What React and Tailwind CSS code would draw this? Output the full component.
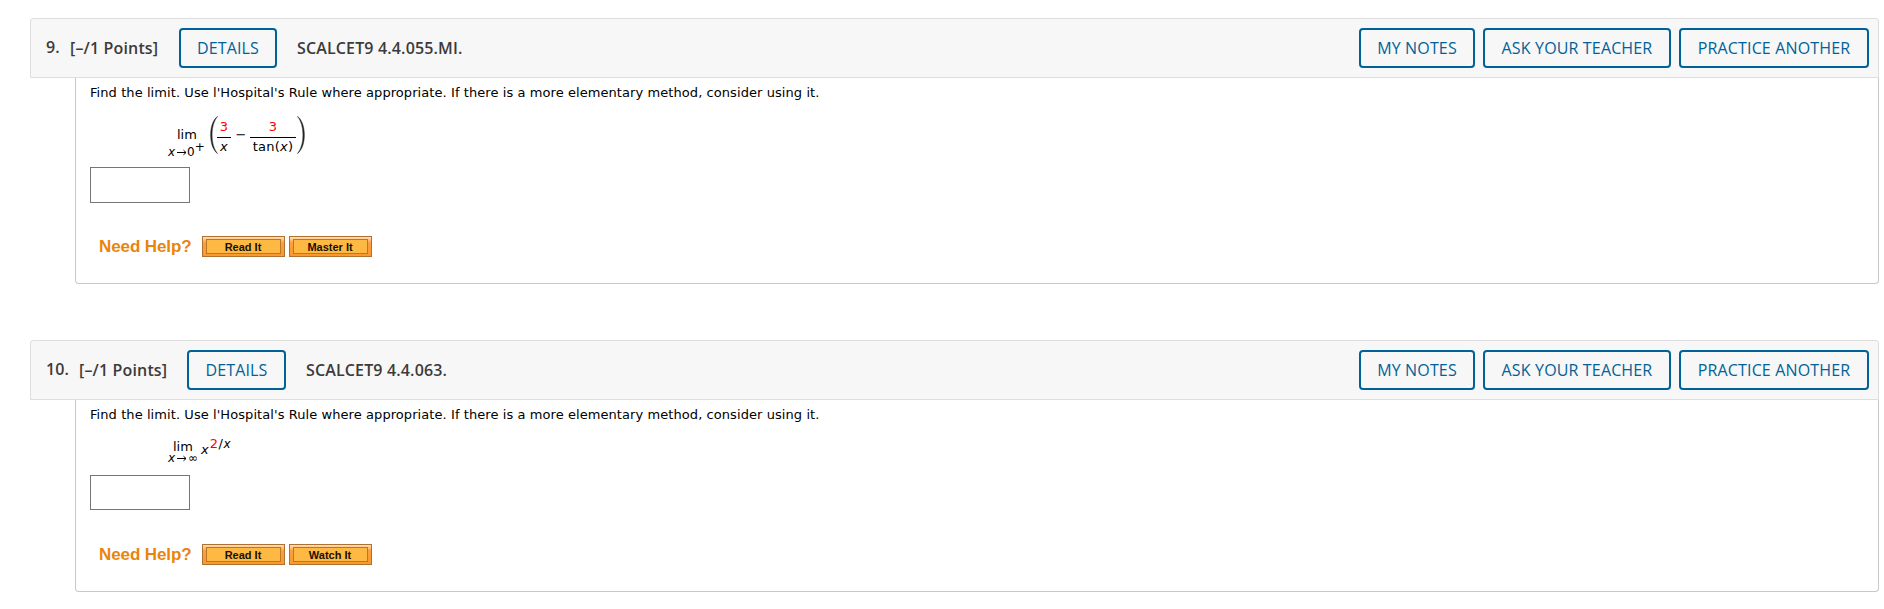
import { useState } from 'react';

const HeaderButton = ({ children, className = '' }) => (
    <button
        type="button"
        className={`h-10 shrink-0 rounded border-2 border-[#006298] text-center font-['Open_Sans',sans-serif] text-base leading-9 font-normal tracking-[0.15px] whitespace-nowrap text-[#006298] ${className}`}
    >
        {children}
    </button>
);

const HelpButton = ({ children }) => (
    <button
        type="button"
        className="h-[21px] w-[83px] border border-[#b07030] bg-linear-to-b from-[#fde0bd] via-[#fb9f3d] via-30% to-[#fa992c] px-[3px] pt-0.5 pb-0.5"
    >
        <span className="block h-[15px] border border-[#b9772a] bg-[#fdb944] pr-px text-center font-['Liberation_Sans',Arial,sans-serif] text-[11px] leading-[14px] font-bold text-[#1a1005]">
            {children}
        </span>
    </button>
);

const Paren = ({ flip = false }) => (
    <svg width="8" height="38" viewBox="0 0 8 38" className={flip ? 'ml-px shrink-0 -scale-x-100' : 'shrink-0'}>
        <path
            d="M7.6 0.3C2.8 4 0.6 11 0.6 19S2.8 34 7.6 37.7C4 33 2.1 27 2.1 19S4 5 7.6 0.3Z"
            fill="#222"
            stroke="#222"
            strokeWidth="0.4"
        />
    </svg>
);

const RightArrow = () => (
    <svg width="10" height="7" viewBox="0 0 10 7" fill="none" stroke="#000">
        <path d="M0 3.5H9M6.5 1.2L9 3.5L6.5 5.8" />
    </svg>
);

const Fraction = ({ top, bottom, className }) => (
    <span className={`flex shrink-0 flex-col text-center ${className}`}>
        <span className="h-[17px] shrink-0 leading-[14px] text-[#ff0000]">{top}</span>
        <span className="h-px shrink-0 bg-black" />
        <span className="h-[18px] shrink-0 leading-[17px] tracking-[0.2px] whitespace-nowrap">{bottom}</span>
    </span>
);

const DifferenceLimit = () => (
    <div className="flex h-[38px] pl-[78px]">
        <div className="flex w-[42px] shrink-0 flex-col pt-[10px]">
            <span className="h-[19px] shrink-0 pl-[9px] leading-[17px]">lim</span>
            <span className="flex h-[14px] shrink-0 items-center text-[12px] leading-[14px]">
                <i>x</i>
                <span className="ml-[2px]"><RightArrow /></span>
                <span>0</span>
                <span className="-mt-[11px] text-[12px]">+</span>
            </span>
        </div>
        <Paren />
        <Fraction className="-ml-px mt-[4px] w-[14px]" top="3" bottom={<i>x</i>} />
        <span className="mt-[10px] w-[19px] pl-px text-center leading-[18px]">−</span>
        <Fraction className="mt-[4px] w-[46px]" top="3" bottom={<>tan(<i>x</i>)</>} />
        <Paren flip />
    </div>
);

const PowerLimit = () => (
    <div className="flex h-[32px] pl-[78px]">
        <div className="-mt-px flex w-[33px] shrink-0 flex-col">
            <span className="h-[14px] pl-[5px] leading-[16px]">lim</span>
            <span className="flex h-[10px] items-center text-[12px] leading-[10px]">
                <i>x</i>
                <span className="ml-[2px]"><RightArrow /></span>
                <span className="ml-px">∞</span>
            </span>
        </div>
        <i className="mt-[2px] leading-[16px]">x</i>
        <span className="-mt-[3px] ml-px leading-[14px]">
            <span className="text-[#ff0000]">2</span>
            <span className="mx-[0.5px]">/</span>
            <i className="text-[12px]">x</i>
        </span>
    </div>
);

const questions = [
    {
        number: '9.',
        code: 'SCALCET9 4.4.055.MI.',
        math: <DifferenceLimit />,
        help: ['Read It', 'Master It'],
        numberWidth: 'w-[24px]',
        pointsWidth: 'w-[109px]',
        detailsWidth: 'w-[98px]',
        bodyHeight: 'h-[206px]',
        mathGap: 'mt-[12px]',
        inputSize: 'mt-[13px] h-[36px]',
        helpGap: 'mt-[33px]',
    },
    {
        number: '10.',
        code: 'SCALCET9 4.4.063.',
        math: <PowerLimit />,
        help: ['Read It', 'Watch It'],
        numberWidth: 'w-[33px]',
        pointsWidth: 'w-[108px]',
        detailsWidth: 'w-[99px]',
        bodyHeight: 'h-[192px]',
        mathGap: 'mt-[14px]',
        inputSize: 'mt-[3px] h-[35px]',
        helpGap: 'mt-[34px]',
    },
];

const Question = ({ question }) => {
    const [answer, setAnswer] = useState('');

    return (
        <section>
            <header className="flex h-[60px] items-center rounded-t-[3px] border border-[#dedede] bg-[#f7f7f7] pr-[9px] pl-[15px] font-['Open_Sans',sans-serif] text-base font-semibold tracking-[0.15px] text-[#3c3a3a]">
                <span className={`-mt-0.5 shrink-0 ${question.numberWidth}`}>{question.number}</span>
                <span className={`shrink-0 whitespace-nowrap ${question.pointsWidth}`}>[–/1 Points]</span>
                <HeaderButton className={question.detailsWidth}>DETAILS</HeaderButton>
                <span className="ml-5">{question.code}</span>
                <div className="ml-auto flex gap-2">
                    <HeaderButton className="w-[116px]">MY NOTES</HeaderButton>
                    <HeaderButton className="w-[188px]">ASK YOUR TEACHER</HeaderButton>
                    <HeaderButton className="w-[190px]">PRACTICE ANOTHER</HeaderButton>
                </div>
            </header>

            <div className={`ml-[45px] rounded-b border border-t-0 border-[#c8c8c8] pt-[6px] pl-[14px] font-['DejaVu_Sans',Verdana,sans-serif] text-[13px] text-black ${question.bodyHeight}`}>
                <p className="h-[20px] leading-[18px] tracking-[0.075px]">
                    Find the limit. Use l'Hospital's Rule where appropriate. If there is a more elementary method, consider using it.
                </p>
                <div className={question.mathGap}>{question.math}</div>
                <input
                    type="text"
                    value={answer}
                    onChange={(e) => setAnswer(e.target.value)}
                    className={`block w-[100px] border border-[#767676] px-2 ${question.inputSize}`}
                />
                <div className={`flex items-center pl-[8px] ${question.helpGap}`}>
                    <span className="w-[104px] pl-px font-['Liberation_Sans',Arial,sans-serif] text-[17px] leading-[21px] font-bold tracking-[-0.1px] whitespace-nowrap text-[#e8850c]">
                        Need Help?
                    </span>
                    <div className="flex gap-1">
                        {question.help.map((label) => (
                            <HelpButton key={label}>{label}</HelpButton>
                        ))}
                    </div>
                </div>
            </div>
        </section>
    );
};

const App = () => (
    <main className="flex h-[609px] flex-col gap-14 overflow-hidden bg-white pt-[18px] pr-[5px] pl-[30px]">
        {questions.map((question) => (
            <Question key={question.number} question={question} />
        ))}
    </main>
);

export default App;
